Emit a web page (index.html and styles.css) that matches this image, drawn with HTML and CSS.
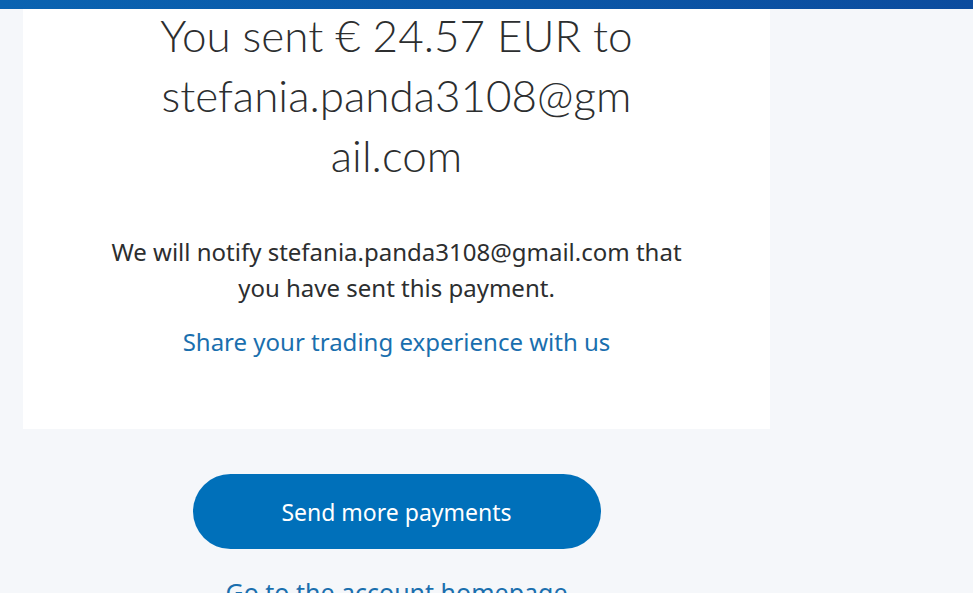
FILE: index.html
```html
<!DOCTYPE html>
<html lang="en">
<head>
<meta charset="utf-8">
<title>Payment sent</title>
<link rel="stylesheet" href="styles.css">
</head>
<body>
<div class="topbar"></div>
<main class="column">
  <section class="card">
    <h1 class="title">You sent € 24.57 EUR to stefania.panda3108@gmail.com</h1>
    <p class="note">We will notify stefania.panda3108@gmail.com that you have sent this payment.</p>
    <a class="share" href="#">Share your trading experience with us</a>
  </section>
  <div class="actions">
    <a class="btn" href="#">Send more payments</a>
    <a class="home" href="#">Go to the account homepage</a>
  </div>
</main>
</body>
</html>
```
FILE: styles.css
```css
html, body {
  margin: 0;
  padding: 0;
  background: #f5f7fa;
  overflow: hidden;
}
body {
  font-family: "Noto Sans", "Open Sans", sans-serif;
  color: #2c2e2f;
}
.topbar {
  height: 9px;
  background: linear-gradient(90deg, #0a63b1 0%, #0b58a8 50%, #0c4c9e 100%);
}
.column {
  width: 747px;
  margin-left: 23px;
  display: flex;
  flex-direction: column;
  align-items: center;
}
.card {
  width: 100%;
  height: 420px;
  box-sizing: border-box;
  background: #ffffff;
  display: flex;
  flex-direction: column;
  align-items: center;
  text-align: center;
}
.title {
  margin: -4px 0 0;
  width: 482px;
  font-family: "Lato", sans-serif;
  font-weight: 300;
  font-size: 44px;
  line-height: 60px;
  color: #2c2e2f;
  overflow-wrap: anywhere;
}
.note {
  margin: 49px 0 0;
  width: 600px;
  font-size: 24px;
  line-height: 36px;
  color: #2c2e2f;
}
.share {
  margin-top: 20px;
  font-size: 24px;
  line-height: 32px;
  color: #1a6fae;
  text-decoration: none;
}
.actions {
  display: flex;
  flex-direction: column;
  align-items: center;
  padding-top: 45px;
}
.btn {
  width: 408px;
  height: 75px;
  border-radius: 38px;
  background: #0070ba;
  color: #ffffff;
  font-size: 23px;
  text-decoration: none;
  display: flex;
  align-items: center;
  justify-content: center;
}
.home {
  margin-top: 26px;
  font-size: 25px;
  color: #1a6fae;
  text-decoration: none;
}
```
